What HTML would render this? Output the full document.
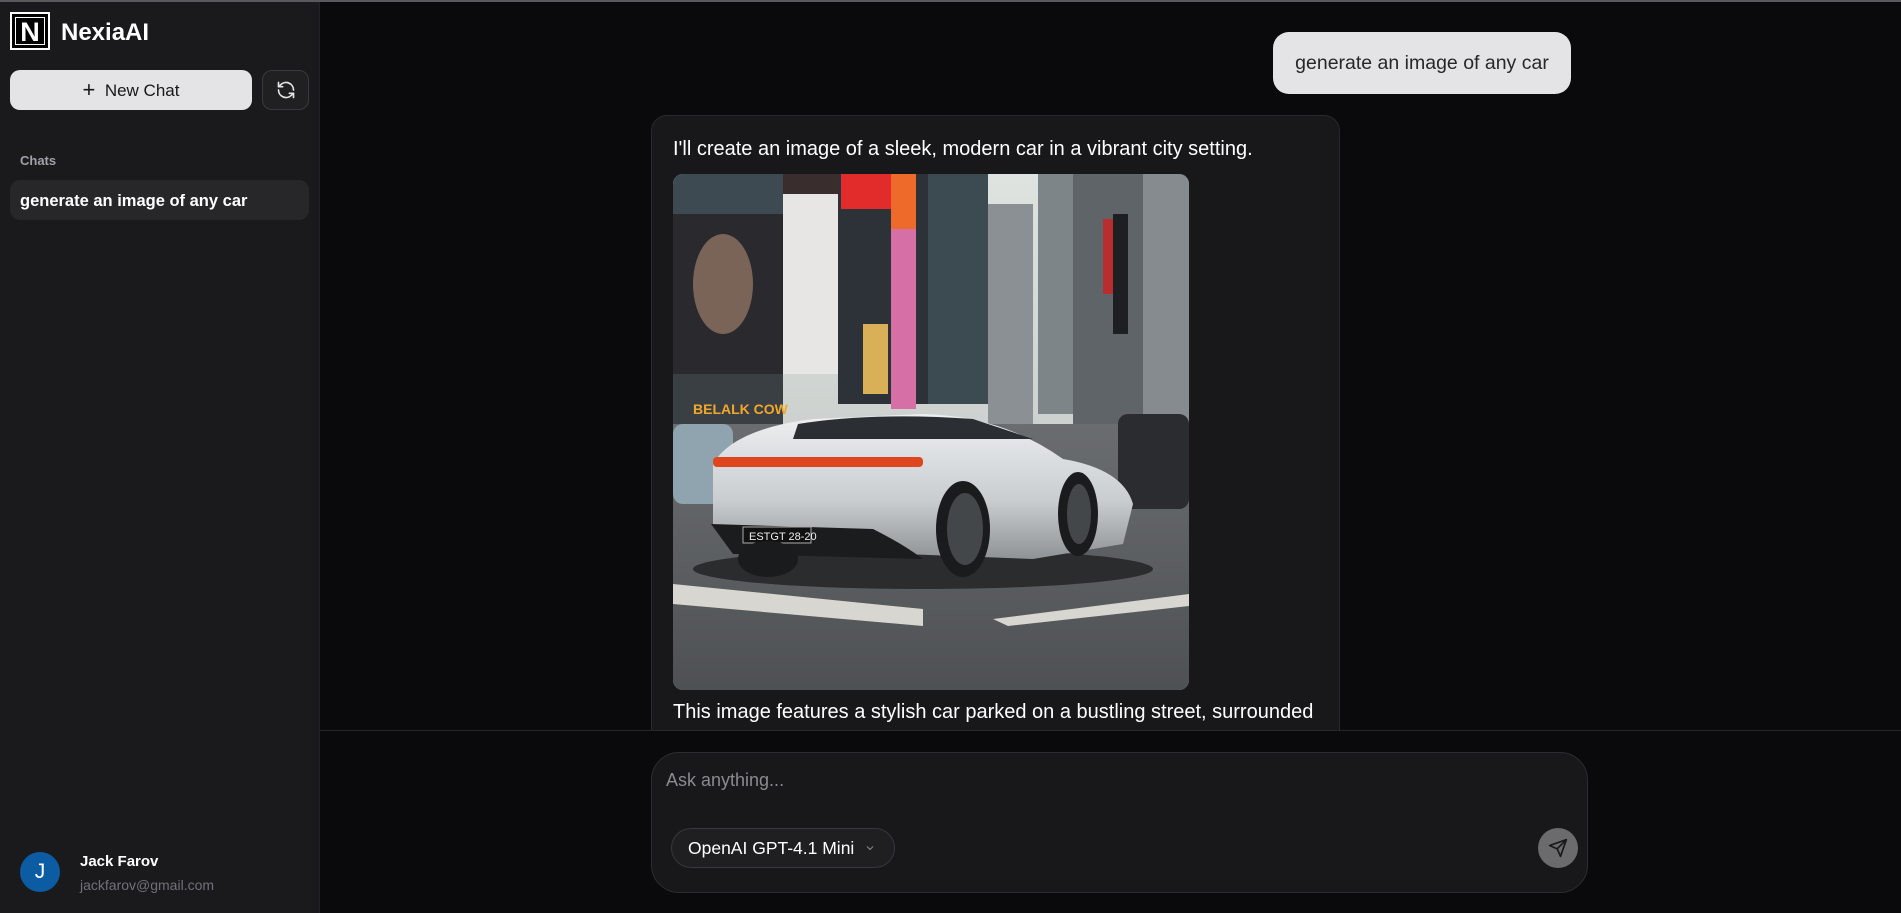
<!DOCTYPE html>
<html><head><meta charset="utf-8"><style>
*{box-sizing:border-box;margin:0;padding:0}
body{width:1901px;height:913px;overflow:hidden;background:#0a0a0c;font-family:"Liberation Sans",sans-serif;position:relative;color:#fff}
.top{position:absolute;left:0;top:0;width:1901px;height:2px;background:#5a5a5e}
.side{position:absolute;left:0;top:2px;width:320px;height:911px;background:#1a1a1c;border-right:1px solid #222226}
.abs{position:absolute}
</style></head><body>
<div class="top"></div>
<div class="side">
  <div class="abs" style="left:10px;top:10px;width:40px;height:38px;border:2px solid #fff;background:#000;">
    <div class="abs" style="left:3px;top:3px;right:3px;bottom:3px;border:1px solid #fff;color:#fff;font-weight:bold;font-size:27px;line-height:28px;text-align:center">N</div>
  </div>
  <div class="abs" style="left:61px;top:17px;font-size:24px;font-weight:bold">NexiaAI</div>
  <div class="abs" style="left:10px;top:68px;width:242px;height:40px;background:#e4e4e7;border-radius:10px;color:#18181b;font-size:17px;line-height:40px;text-align:center"><span style="font-size:22px;vertical-align:-1px">+</span>&nbsp; New Chat</div>
  <div class="abs" style="left:262px;top:68px;width:47px;height:40px;border:1px solid #3a3a3e;border-radius:10px;background:#202023">
    <svg width="20" height="20" viewBox="0 0 24 24" style="position:absolute;left:13px;top:9px" fill="none" stroke="#e4e4e7" stroke-width="2" stroke-linecap="round" stroke-linejoin="round"><path d="M21 12a9 9 0 0 0-15.5-6.2L3 8"/><path d="M3 3v5h5"/><path d="M3 12a9 9 0 0 0 15.5 6.2L21 16"/><path d="M16 16h5v5"/></svg>
  </div>
  <div class="abs" style="left:20px;top:151px;font-size:13px;color:#a1a1aa;font-weight:bold">Chats</div>
  <div class="abs" style="left:10px;top:178px;width:299px;height:40px;background:#27272a;border-radius:10px;font-size:16.5px;font-weight:bold;line-height:42px;padding-left:10px">generate an image of any car</div>
  <div class="abs" style="left:20px;top:850px;width:40px;height:40px;border-radius:50%;background:#0b5ca3;font-size:21px;line-height:40px;text-align:center">J</div>
  <div class="abs" style="left:80px;top:851px;font-size:15px;font-weight:bold">Jack Farov</div>
  <div class="abs" style="left:80px;top:875px;font-size:14px;color:#71717a">jackfarov@gmail.com</div>
</div>

<div class="abs" style="left:1273px;top:32px;width:298px;height:62px;background:#e4e4e7;border-radius:16px;color:#27272a;font-size:19.5px;line-height:62px;text-align:center;white-space:nowrap">generate an image of any car</div>

<div class="abs" style="left:651px;top:115px;width:689px;height:640px;background:#18181b;border:1px solid #29292d;border-radius:16px;overflow:hidden">
  <div class="abs" style="left:21px;top:22px;font-size:20px;white-space:nowrap">I'll create an image of a sleek, modern car in a vibrant city setting.</div>
  <svg class="abs" style="left:21px;top:58px;border-radius:10px" width="516" height="516" viewBox="0 0 516 516">
    <defs>
      <linearGradient id="sky" x1="0" y1="0" x2="0" y2="1"><stop offset="0" stop-color="#dfe3e0"/><stop offset="1" stop-color="#b9bfbd"/></linearGradient>
      <linearGradient id="road" x1="0" y1="0" x2="0" y2="1"><stop offset="0" stop-color="#6a6d6f"/><stop offset="1" stop-color="#4e5153"/></linearGradient>
      <linearGradient id="car" x1="0" y1="0" x2="0" y2="1"><stop offset="0" stop-color="#eef0f1"/><stop offset="0.6" stop-color="#c9cdd0"/><stop offset="1" stop-color="#8e9396"/></linearGradient>
    </defs>
    <rect width="516" height="516" fill="url(#sky)"/>
    <rect x="0" y="0" width="110" height="215" fill="#3e4a52"/>
    <rect x="0" y="40" width="110" height="160" fill="#2a2a2e"/>
    <ellipse cx="50" cy="110" rx="30" ry="50" fill="#7a6458"/>
    <rect x="110" y="0" width="60" height="200" fill="#e8e6e4"/>
    <rect x="110" y="0" width="60" height="20" fill="#3a2d2d"/>
    <rect x="165" y="0" width="90" height="230" fill="#2c3238"/>
    <rect x="168" y="0" width="50" height="35" fill="#e22b2b"/>
    <rect x="218" y="0" width="25" height="60" fill="#ee6a2a"/>
    <rect x="218" y="55" width="25" height="180" fill="#d56fa5"/>
    <rect x="190" y="150" width="25" height="70" fill="#d9b057"/>
    <rect x="255" y="0" width="60" height="230" fill="#3c4a52"/>
    <rect x="315" y="30" width="45" height="230" fill="#8a9094"/>
    <rect x="365" y="0" width="40" height="240" fill="#7e8589"/>
    <rect x="400" y="0" width="116" height="250" fill="#5f6468"/>
    <rect x="440" y="40" width="15" height="120" fill="#1d1f22"/>
    <rect x="430" y="45" width="10" height="75" fill="#b82d2d"/>
    <rect x="470" y="0" width="46" height="250" fill="#868b8f"/>
    <rect x="0" y="200" width="110" height="60" fill="#3a3f44"/>
    <text x="20" y="240" font-size="14" font-weight="bold" fill="#f1a82a" font-family="Liberation Sans">BELALK COW</text>
    <rect x="0" y="250" width="516" height="266" fill="url(#road)"/>
    <rect x="0" y="250" width="60" height="80" fill="#8fa4ae" rx="10"/>
    <rect x="445" y="240" width="71" height="95" fill="#2a2c30" rx="10"/>
    <polygon points="0,410 250,435 250,452 0,430" fill="#d8d6d0"/>
    <polygon points="320,445 516,420 516,432 335,452" fill="#d8d6d0"/>
    <ellipse cx="250" cy="395" rx="230" ry="20" fill="#2a2c2e"/>
    <path d="M40,290 Q60,255 140,245 L250,240 Q330,242 390,285 Q450,295 460,330 L450,370 L360,385 L230,380 L80,370 L40,350 Z" fill="url(#car)"/>
    <path d="M125,250 Q200,238 300,245 L360,265 L120,265 Z" fill="#2b2f33"/>
    <rect x="40" y="283" width="210" height="10" rx="4" fill="#e0461e"/>
    <path d="M38,350 L200,355 Q230,370 250,385 L60,380 Z" fill="#1b1c1e"/>
    <rect x="70" y="353" width="68" height="16" fill="#111" stroke="#aaa" stroke-width="1"/>
    <text x="76" y="366" font-size="11" fill="#eee" font-family="Liberation Sans">ESTGT 28-20</text>
    <ellipse cx="290" cy="355" rx="27" ry="48" fill="#1a1b1d"/>
    <ellipse cx="292" cy="355" rx="18" ry="36" fill="#44474a"/>
    <ellipse cx="405" cy="340" rx="20" ry="42" fill="#1a1b1d"/>
    <ellipse cx="406" cy="340" rx="12" ry="30" fill="#44474a"/>
    <ellipse cx="95" cy="385" rx="30" ry="18" fill="#1a1b1d"/>
  </svg>
  <div class="abs" style="left:21px;top:585px;font-size:20px;white-space:nowrap">This image features a stylish car parked on a bustling street, surrounded</div>
</div>

<div class="abs" style="left:320px;top:730px;width:1581px;height:183px;background:#0a0a0c;border-top:1px solid #27272a"></div>
<div class="abs" style="left:651px;top:752px;width:937px;height:141px;background:#18181b;border:1px solid #2d2d31;border-radius:28px">
  <div class="abs" style="left:14px;top:17px;font-size:18px;color:#8a8a90">Ask anything...</div>
  <div class="abs" style="left:19px;top:75px;width:224px;height:40px;border:1px solid #37373c;border-radius:20px;background:#1f1f22;font-size:17.5px;line-height:38px;padding-left:16px;white-space:nowrap">OpenAI GPT-4.1 Mini
    <svg width="12" height="12" viewBox="0 0 24 24" style="position:absolute;right:18px;top:13px" fill="none" stroke="#8a8a90" stroke-width="2"><path d="M6 9l6 6 6-6"/></svg>
  </div>
  <div class="abs" style="left:886px;top:75px;width:40px;height:40px;border-radius:50%;background:#6b6b6d">
    <svg width="20" height="20" viewBox="0 0 24 24" style="position:absolute;left:10px;top:10px" fill="none" stroke="#18181b" stroke-width="2" stroke-linejoin="round"><path d="M22 2L11 13"/><path d="M22 2l-7 20-4-9-9-4z"/></svg>
  </div>
</div>
</body></html>
